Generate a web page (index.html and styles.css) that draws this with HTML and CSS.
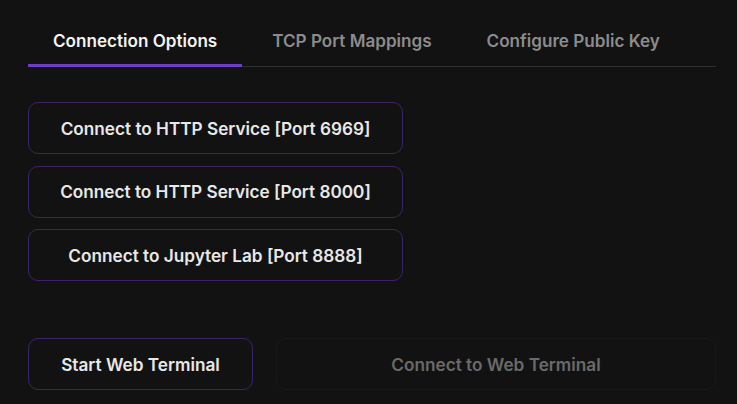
FILE: index.html
```html
<!DOCTYPE html>
<html>
<head>
<meta charset="utf-8">
<link rel="stylesheet" href="styles.css">
</head>
<body>
<div class="panel">
  <div class="tabs">
    <div class="tab active">Connection Options</div>
    <div class="tab">TCP Port Mappings</div>
    <div class="tab">Configure Public Key</div>
  </div>
  <div class="options">
    <button class="btn">Connect to HTTP Service [Port 6969]</button>
    <button class="btn">Connect to HTTP Service [Port 8000]</button>
    <button class="btn">Connect to Jupyter Lab [Port 8888]</button>
  </div>
  <div class="terminal">
    <button class="btn">Start Web Terminal</button>
    <button class="btn disabled">Connect to Web Terminal</button>
  </div>
</div>
</body>
</html>
```
FILE: styles.css
```css
html, body {
  margin: 0;
  padding: 0;
  background: #121212;
}
body {
  font-family: Inter, "Noto Sans", sans-serif;
  width: 737px;
  height: 404px;
  overflow: hidden;
}
.panel {
  padding: 16px 21px 0 28px;
}
.tabs {
  display: flex;
  gap: 5px;
  border-bottom: 1px solid #2f2f2f;
}
.tab {
  padding: 15px 25px 13px;
  font-size: 17.1px;
  line-height: 20px;
  font-weight: 600;
  color: #8c8c8c;
  border-bottom: 3px solid transparent;
  margin-bottom: -1px;
}
.tab.active {
  color: #f4f4f4;
  border-bottom-color: #6a3fc1;
}
.options {
  margin-top: 35px;
  width: 375px;
  display: flex;
  flex-direction: column;
  gap: 11.5px;
}
.btn {
  display: block;
  box-sizing: border-box;
  height: 52px;
  background: #121212;
  border: 1px solid #3a2568;
  border-radius: 10px;
  font-family: Inter, "Noto Sans", sans-serif;
  font-size: 17.2px;
  font-weight: 600;
  color: #e8e8e8;
  padding: 0 16px;
  text-align: center;
}
.terminal {
  margin-top: 57px;
  display: grid;
  grid-template-columns: 225px 1fr;
  gap: 23px;
}
.btn.disabled {
  border-color: #191919;
  color: #6a6a6a;
}
```
